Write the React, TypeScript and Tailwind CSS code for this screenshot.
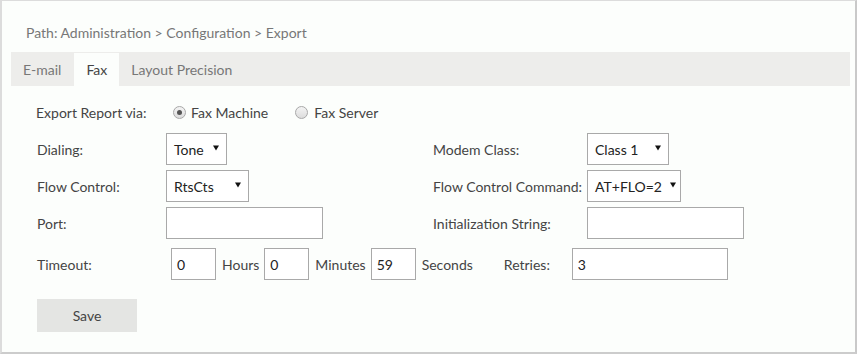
import React from "react";

const Arrow = () => (
  <svg width="6" height="6" viewBox="0 0 6 6" className="shrink-0">
    <polygon points="0,0.5 6,0.5 3,5.5" fill="#111" />
  </svg>
);

function Select({ value, width }: { value: string; width: number }) {
  return (
    <div
      className="h-[32px] border border-[#a9a9a9] bg-white flex items-center justify-between pl-[7px] pr-[7px] text-[#222]"
      style={{ width }}
    >
      <span>{value}</span>
      <span className="-mt-[3px]"><Arrow /></span>
    </div>
  );
}

function Input({ value = "", width }: { value?: string; width: number }) {
  return (
    <div
      className="h-[32px] border border-[#a9a9a9] bg-white flex items-center pl-[5px] text-[#222]"
      style={{ width }}
    >
      {value}
    </div>
  );
}

function Radio({ checked }: { checked?: boolean }) {
  return (
    <span className="w-[13px] h-[13px] rounded-full border border-[#a8a8a8] bg-[linear-gradient(#f4f4f4,#dcdcdc)] flex items-center justify-center shrink-0">
      {checked && <span className="w-[5px] h-[5px] rounded-full bg-[#555]" />}
    </span>
  );
}

export default function App() {
  return (
    <div
      className="w-[858px] h-[355px] bg-white text-[14px] text-[#444]"
      style={{ fontFamily: "Lato, 'Open Sans', sans-serif" }}
    >
      <div className="w-[857px] h-[354px] bg-[#fcfefc] border-l-2 border-l-[#dcdcdc] border-t border-t-[#dcdcdc] border-r-2 border-r-[#c9c9c9] border-b-2 border-b-[#cccccc] pt-[22px]">
        <div className="ml-[24px] h-[20px] leading-[20px] text-[#777]">
          Path: Administration &gt; Configuration &gt; Export
        </div>
        <div className="ml-[9px] mr-[5px] mt-[9px] h-[34px] bg-[#ededeb] flex text-[#777] pt-[1px]">
          <div className="pl-[12px] pr-[13px] flex items-center">E-mail</div>
          <div className="px-[12px] flex items-center bg-[#fcfefc] text-[#444]">Fax</div>
          <div className="px-[12px] flex items-center">Layout Precision</div>
        </div>

        <div className="ml-[35px] mt-[16px]">
          <div className="h-[20px] flex items-center">
            <span className="w-[137px] -ml-[1px]">Export Report via:</span>
            <Radio checked />
            <span className="ml-[5px]">Fax Machine</span>
            <span className="ml-[27px]"><Radio /></span>
            <span className="ml-[6px]">Fax Server</span>
          </div>

          <div className="mt-[11px] flex items-center h-[32px]">
            <div className="w-[396px] flex items-center">
              <span className="w-[129px]">Dialing:</span>
              <Select value="Tone" width={61} />
            </div>
            <span className="w-[154px]">Modem Class:</span>
            <Select value="Class 1" width={82} />
          </div>

          <div className="mt-[5px] flex items-center h-[32px]">
            <div className="w-[396px] flex items-center">
              <span className="w-[129px]">Flow Control:</span>
              <Select value="RtsCts" width={83} />
            </div>
            <span className="w-[154px]">Flow Control Command:</span>
            <div className="h-[32px] w-[94px] border border-[#a9a9a9] bg-white flex items-center justify-between pl-[7px] pr-[4px] text-[#222]">
              <span>AT+FLO=2</span>
              <span className="-mt-[3px]"><Arrow /></span>
            </div>
          </div>

          <div className="mt-[5px] flex items-center h-[32px]">
            <div className="w-[396px] flex items-center">
              <span className="w-[129px]">Port:</span>
              <Input width={157} />
            </div>
            <span className="w-[154px]">Initialization String:</span>
            <Input width={157} />
          </div>

          <div className="mt-[9px] flex items-center h-[32px]">
            <span className="w-[134px]">Timeout:</span>
            <Input value="0" width={45} />
            <span className="ml-[6px]">Hours</span>
            <span className="ml-[5px]"><Input value="0" width={45} /></span>
            <span className="ml-[6px]">Minutes</span>
            <span className="ml-[5px]"><Input value="59" width={45} /></span>
            <span className="ml-[6px]">Seconds</span>
            <span className="ml-[31px] w-[68px]">Retries:</span>
            <Input value="3" width={156} />
          </div>

          <div className="mt-[19px] w-[100px] h-[33px] bg-[#e4e5e3] flex items-center justify-center">
            Save
          </div>
        </div>
      </div>
    </div>
  );
}
